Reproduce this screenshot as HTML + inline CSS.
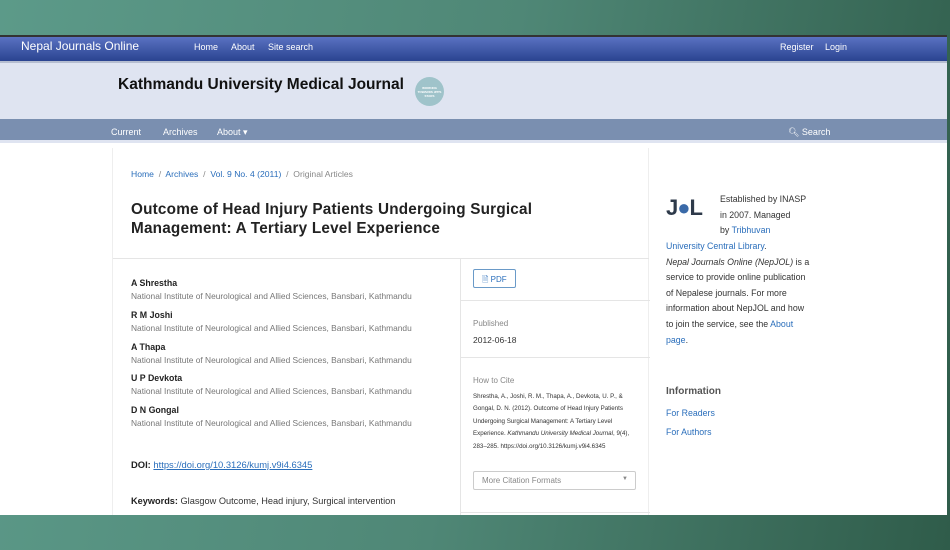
<!DOCTYPE html>
<html><head><meta charset="utf-8"><style>
*{margin:0;padding:0;box-sizing:border-box}
body{width:950px;height:550px;overflow:hidden;font-family:"Liberation Sans",sans-serif;background:linear-gradient(100deg,#5c9a89 0%,#4f8776 50%,#2f5c4a 100%);position:relative}
.page{position:absolute;left:0;top:35px;width:947px;height:480px;background:#fff;overflow:hidden;border-top:2px solid #333}
.top{height:24px;background:linear-gradient(#5a72c2,#2a4390);color:#fff;position:relative;font-size:9px}
.top .brand{position:absolute;left:21px;top:2px;font-size:12px}
.top a{position:absolute;top:5px;color:#fff}
.hdr{height:58px;background:#dfe4f1;border-top:2px solid #b5bdd0;position:relative}
.hdr h1{position:absolute;left:118px;top:13px;font-size:15.5px;color:#111;font-weight:bold}
.badge{position:absolute;left:415px;top:14px;width:29px;height:29px;border-radius:50%;background:#9fc3ca;color:#fff;font-size:3px;text-align:center;padding-top:9px;font-weight:bold}
.nav{height:24px;background:#7a8fb0;position:relative;color:#fff;font-size:9px;border-bottom:3px solid #dfe4f1}
.nav span{position:absolute;top:8px}
.main{position:absolute;left:112px;top:111px;width:537px;height:380px;border-left:1px solid #eee;border-right:1px solid #eee}
.bc{position:absolute;left:18px;top:21px;font-size:8.6px;color:#888}
.bc a{color:#2a6ebb}
.title{position:absolute;left:18px;top:52px;font-size:15.3px;font-weight:bold;color:#222;line-height:19px;letter-spacing:0.2px}
.hr{position:absolute;left:0;top:110px;width:536px;border-top:1px solid #e5e5e5}
.auth{position:absolute;left:18px;font-size:8.8px}
.auth b{display:block;color:#222}
.auth i{font-style:normal;color:#777;font-size:8.4px;display:block;margin-top:3px}
.side{position:absolute;left:347px;top:110px;width:189px;height:270px;border-left:1px solid #e5e5e5}
.sec{position:absolute;left:0;width:189px;border-bottom:1px solid #e5e5e5}
.lbl{font-size:8px;color:#888}
.sb{position:absolute;left:666px;font-size:8.8px;color:#333;line-height:15.6px}
.sb a{color:#2a6ebb}
</style></head><body>
<div class="page">
<div class="top"><span class="brand">Nepal Journals Online</span>
<a style="left:194px">Home</a><a style="left:231px">About</a><a style="left:268px">Site search</a>
<a style="left:780px">Register</a><a style="left:825px">Login</a></div>
<div class="hdr"><h1>Kathmandu University Medical Journal</h1><div class="badge">WORKING TOWARDS JPPS STARS</div></div>
<div class="nav"><span style="left:111px">Current</span><span style="left:163px">Archives</span><span style="left:217px">About ▾</span><span style="left:788px">&#x1F50D;&#xFE0E; Search</span></div>
<div class="main">
<div class="bc"><a>Home</a> &nbsp;/&nbsp; <a>Archives</a> &nbsp;/&nbsp; <a>Vol. 9 No. 4 (2011)</a> &nbsp;/&nbsp; Original Articles</div>
<div class="title">Outcome of Head Injury Patients Undergoing Surgical<br>Management: A Tertiary Level Experience</div>
<div class="hr"></div>
<div class="auth" style="top:130px"><b>A Shrestha</b><i>National Institute of Neurological and Allied Sciences, Bansbari, Kathmandu</i></div>
<div class="auth" style="top:162px"><b>R M Joshi</b><i>National Institute of Neurological and Allied Sciences, Bansbari, Kathmandu</i></div>
<div class="auth" style="top:194px"><b>A Thapa</b><i>National Institute of Neurological and Allied Sciences, Bansbari, Kathmandu</i></div>
<div class="auth" style="top:225px"><b>U P Devkota</b><i>National Institute of Neurological and Allied Sciences, Bansbari, Kathmandu</i></div>
<div class="auth" style="top:257px"><b>D N Gongal</b><i>National Institute of Neurological and Allied Sciences, Bansbari, Kathmandu</i></div>
<div class="auth" style="top:311px;font-size:9.4px"><b style="display:inline">DOI:</b> <a style="color:#2a6ebb;text-decoration:underline">https://doi.org/10.3126/kumj.v9i4.6345</a></div>
<div class="auth" style="top:348px;font-size:9.2px;color:#333"><b style="display:inline">Keywords:</b> Glasgow Outcome, Head injury, Surgical intervention</div>
<div class="side">
<div class="sec" style="top:0;height:43px"><div style="position:absolute;left:12px;top:11px;width:43px;height:19px;border:1px solid #6a9ac8;border-radius:2px;font-size:8px;color:#2a6ebb;padding:4px 0 0 8px">🗎 PDF</div></div>
<div class="sec" style="top:43px;height:57px"><div class="lbl" style="position:absolute;left:12px;top:18px">Published</div><div style="position:absolute;left:12px;top:34px;font-size:8.5px;color:#333">2012-06-18</div></div>
<div class="sec" style="top:100px;height:155px"><div class="lbl" style="position:absolute;left:12px;top:18px">How to Cite</div>
<div style="position:absolute;left:12px;top:33px;width:165px;font-size:6.2px;line-height:12.4px;color:#333">Shrestha, A., Joshi, R. M., Thapa, A., Devkota, U. P., &amp; Gongal, D. N. (2012). Outcome of Head Injury Patients Undergoing Surgical Management: A Tertiary Level Experience. <i>Kathmandu University Medical Journal</i>, 9(4), 283–285. https://doi.org/10.3126/kumj.v9i4.6345</div>
<div style="position:absolute;left:12px;top:113px;width:163px;height:19px;border:1px solid #ccc;border-radius:2px;font-size:8px;color:#888;padding:4px 0 0 8px">More Citation Formats<span style="position:absolute;right:7px;top:4px;font-size:6px">▼</span></div></div>
</div>
</div>
<div style="position:absolute;left:666px;top:158px;width:40px;height:24px;font-weight:900;font-size:22px;color:#2e3a4a;letter-spacing:-1px">J<span style="color:#3a6aa8">●</span>L</div>
<div class="sb" style="top:155px;left:720px">Established by INASP<br>in 2007. Managed<br>by <a>Tribhuvan</a></div>
<div class="sb" style="top:202px;width:160px"><a>University Central Library</a>.<br><i>Nepal Journals Online (NepJOL)</i> is a<br>service to provide online publication<br>of Nepalese journals. For more<br>information about NepJOL and how<br>to join the service, see the <a>About</a><br><a>page</a>.</div>
<div style="position:absolute;left:666px;top:349px;font-size:10px;font-weight:bold;color:#555">Information</div>
<div class="sb" style="top:369px"><a>For Readers</a></div>
<div class="sb" style="top:388px"><a>For Authors</a></div>
</div>
</body></html>
